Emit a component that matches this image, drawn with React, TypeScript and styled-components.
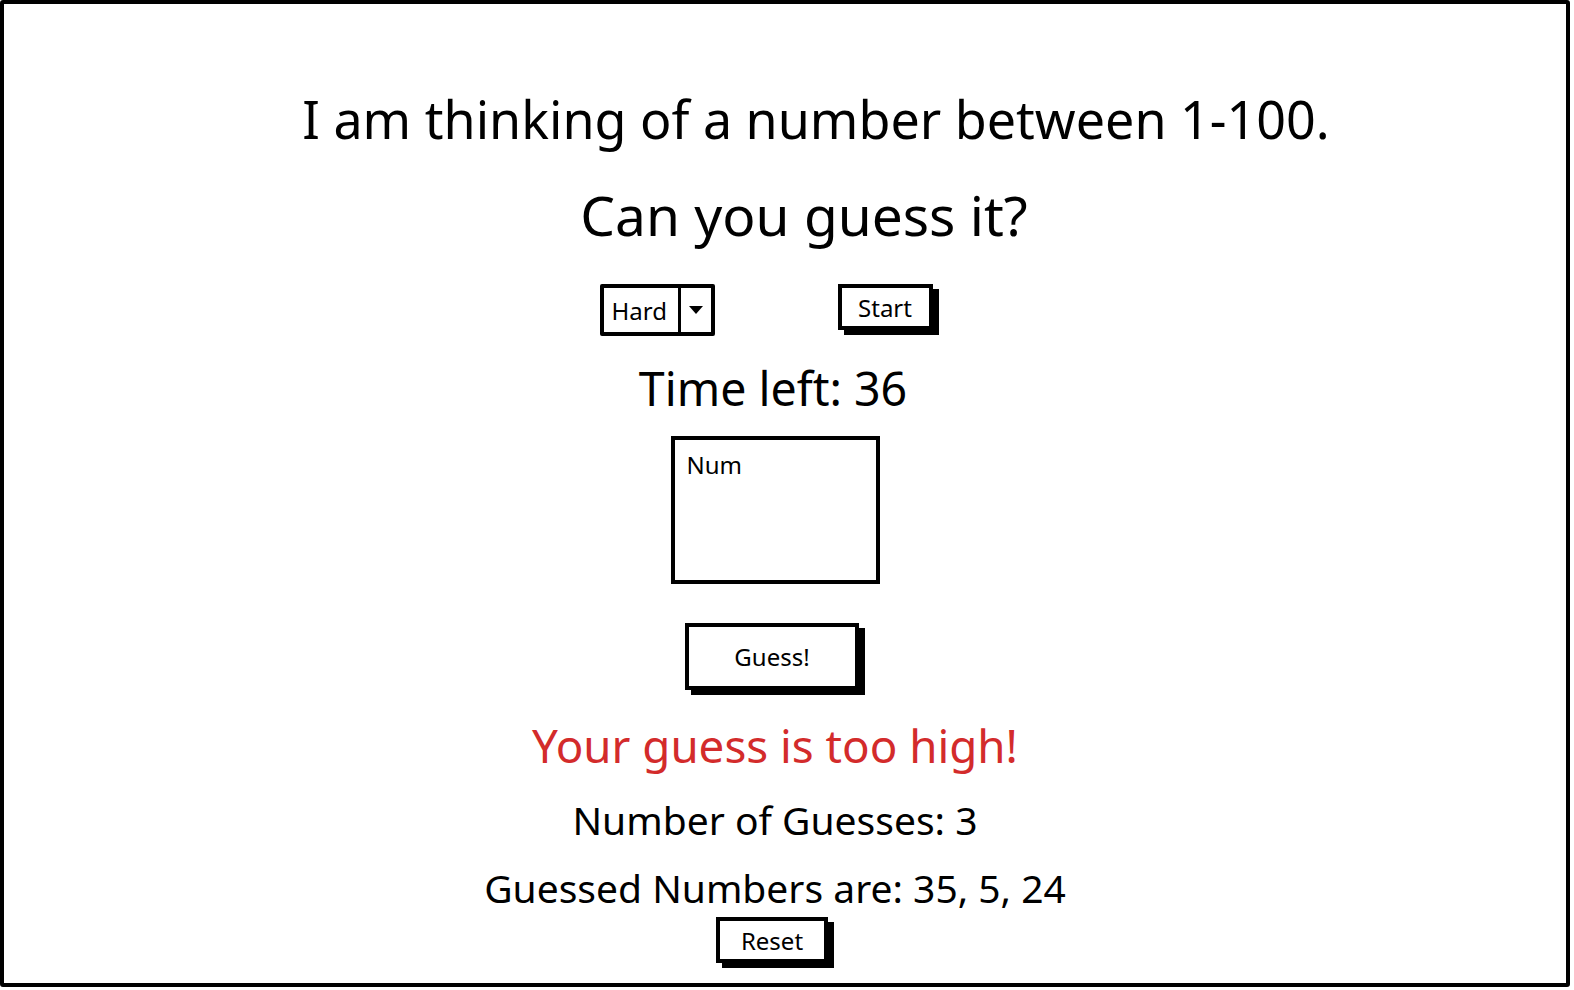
import React from "react";
import styled, { createGlobalStyle } from "styled-components";

const GlobalStyle = createGlobalStyle`
  html, body {
    margin: 0;
    padding: 0;
    background: #ffffff;
  }
  body {
    font-family: "Noto Sans", "Open Sans", sans-serif;
    color: #000;
  }
`;

const Frame = styled.div`
  box-sizing: border-box;
  width: 1570px;
  height: 987px;
  border: 4px solid #000;
  border-radius: 3px;
  display: flex;
  flex-direction: column;
  align-items: center;
  padding: 0 20px 0 0;
  overflow: hidden;
`;

const Line = styled.div<{ $size: number; $top: number; $shift?: number; $color?: string }>`
  font-size: ${(p) => p.$size}px;
  line-height: 1;
  margin-top: ${(p) => p.$top}px;
  margin-left: ${(p) => (p.$shift ?? 0) * 2}px;
  color: ${(p) => p.$color ?? "#000"};
  white-space: nowrap;
`;

const ControlsRow = styled.div`
  display: flex;
  align-items: flex-start;
  gap: 123px;
  margin-top: 42px;
  margin-left: -18px;
`;

const Select = styled.div`
  box-sizing: border-box;
  width: 115px;
  height: 52px;
  border: 4px solid #000;
  border-radius: 2px;
  display: flex;
  align-items: stretch;
`;

const SelectValue = styled.div`
  flex: 1;
  display: flex;
  align-items: center;
  padding-left: 8px;
  font-size: 24px;
  border-right: 3px solid #000;
`;

const SelectArrow = styled.div`
  width: 30px;
  display: flex;
  align-items: center;
  justify-content: center;
`;

const Button = styled.div<{ $w: number; $h: number; $size: number; $shift?: number }>`
  box-sizing: border-box;
  width: ${(p) => p.$w}px;
  height: ${(p) => p.$h}px;
  margin-left: ${(p) => (p.$shift ?? 0) * 2}px;
  border: 4px solid #000;
  box-shadow: 6px 5px 0 #000;
  display: flex;
  align-items: center;
  justify-content: center;
  font-size: ${(p) => p.$size}px;
  background: #fff;
  flex-shrink: 0;
`;

const NumBox = styled.div`
  box-sizing: border-box;
  width: 209px;
  height: 148px;
  border: 4px solid #000;
  margin-top: 24px;
  padding: 8px 12px;
  font-size: 24px;
  flex-shrink: 0;
`;

const Spacer = styled.div<{ $h: number }>`
  height: ${(p) => p.$h}px;
  flex-shrink: 0;
`;

export default function App() {
  return (
    <>
      <GlobalStyle />
      <Frame>
        <Line $size={52} $top={89} $shift={41}>
          I am thinking of a number between 1-100.
        </Line>
        <Line $size={55} $top={42} $shift={29}>
          Can you guess it?
        </Line>
        <ControlsRow>
          <Select>
            <SelectValue>Hard</SelectValue>
            <SelectArrow>
              <svg width="16" height="10" viewBox="0 0 16 10">
                <path d="M1 1 L15 1 L8 9 Z" fill="#000" />
              </svg>
            </SelectArrow>
          </Select>
          <Button $w={95} $h={46} $size={24}>
            Start
          </Button>
        </ControlsRow>
        <Line $size={46.5} $top={29} $shift={-2}>
          Time left: 36
        </Line>
        <NumBox>Num</NumBox>
        <Spacer $h={39} />
        <Button $w={174} $h={67} $size={24} $shift={-3}>
          Guess!
        </Button>
        <Line $size={45.7} $top={33} $color="#d32b2b">
          Your guess is too high!
        </Line>
        <Line $size={39} $top={32}>
          Number of Guesses: 3
        </Line>
        <Line $size={39} $top={29}>
          Guessed Numbers are: 35, 5, 24
        </Line>
        <Spacer $h={10} />
        <Button $w={112} $h={46} $size={24} $shift={-3}>
          Reset
        </Button>
      </Frame>
    </>
  );
}
